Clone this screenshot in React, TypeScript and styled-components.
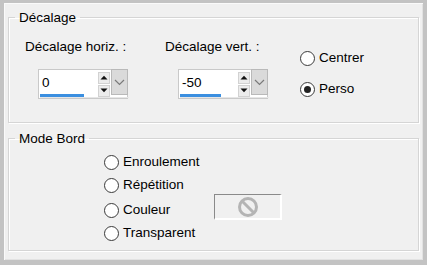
import React from "react";
import styled, { createGlobalStyle } from "styled-components";

const Global = createGlobalStyle`
  html, body { margin: 0; padding: 0; background: #c3c3c3; }
  body { font-family: "Liberation Sans", Arial, sans-serif; }
`;

const Frame = styled.div`
  box-sizing: border-box;
  width: 427px;
  height: 265px;
  background: #f0f0f0;
  border-style: solid;
  border-color: #c3c3c3;
  border-width: 3px 4px 5px 4px;
  box-shadow: inset 1px 1px 0 #fafafa, inset -1px -1px 0 #e2e2e2;
  padding: 7px 4px 0 4px;
  font-size: 13px;
  color: #000;
`;

const Group = styled.fieldset<{ $h: number; $mt?: number }>`
  box-sizing: border-box;
  margin: ${(p) => p.$mt ?? 0}px 0 0 0;
  width: 411px;
  height: ${(p) => p.$h}px;
  border: 1px solid #d5d5d5;
  box-shadow: 1px 1px 0 #ffffff inset, 1px 1px 0 #ffffff;
  padding: 0;
  min-width: 0;
`;

const Legend = styled.legend`
  margin-left: 6px;
  padding: 0 4px 0 4px;
  font-size: 13.5px;
  line-height: 15px;
`;

const OffsetRow = styled.div`
  display: flex;
  align-items: flex-start;
  padding: 14px 0 0 16px;
`;

const Field = styled.div<{ $w: number }>`
  display: flex;
  flex-direction: column;
  width: ${(p) => p.$w}px;
`;

const FieldLabel = styled.div`
  font-size: 13.5px;
  line-height: 15px;
  height: 15px;
`;

const Spinner = styled.div`
  margin: 15px 0 0 13px;
  display: flex;
  width: 90px;
  height: 30px;
  box-sizing: border-box;
  border: 1px solid #c9c9c9;
  background: #fff;
`;

const InputArea = styled.div`
  position: relative;
  width: 59px;
  box-sizing: border-box;
  padding: 5px 0 0 3px;
  font-size: 13.5px;
  line-height: 15px;
  background: #fff;
`;

const Progress = styled.div`
  position: absolute;
  left: 1px;
  bottom: 1px;
  height: 3px;
  background: #3b8fe0;
`;

const ProgressTrack = styled.div`
  position: absolute;
  left: 1px;
  right: -31px;
  bottom: 0px;
  height: 1px;
  background: #e6e6e6;
`;

const SpinCol = styled.div`
  display: flex;
  flex-direction: column;
  justify-content: center;
  gap: 1px;
  width: 13px;
  background: #fff;
`;

const SpinBtn = styled.div`
  width: 12px;
  height: 12px;
  box-sizing: border-box;
  background: #ececec;
  border: 1px solid #d2d2d2;
  display: flex;
  align-items: center;
  justify-content: center;
`;

const DropBtn = styled.div`
  flex: 1;
  background: #dadada;
  border: 1px solid #b9b9b9;
  margin: -1px -1px 3px 0;
  display: flex;
  align-items: center;
  justify-content: center;
`;

const RadioList = styled.div<{ $gap: number; $pt: number; $pl: number }>`
  display: flex;
  flex-direction: column;
  gap: ${(p) => p.$gap}px;
  padding: ${(p) => p.$pt}px 0 0 ${(p) => p.$pl}px;
`;

const RadioRow = styled.div`
  display: flex;
  align-items: center;
  gap: 4px;
  height: 16px;
  font-size: 13.5px;
  line-height: 16px;
`;

const RadioCircle = styled.span<{ $on?: boolean }>`
  box-sizing: border-box;
  width: 15px;
  height: 15px;
  border-radius: 50%;
  border: 1px solid #3a3a3a;
  background: #fff;
  display: flex;
  align-items: center;
  justify-content: center;
  &::after {
    content: "";
    display: ${(p) => (p.$on ? "block" : "none")};
    width: 7px;
    height: 7px;
    border-radius: 50%;
    background: #222;
  }
`;

const ModeBody = styled.div`
  display: flex;
  padding: 7px 0 0 95px;
`;

const ColorRow = styled.div`
  display: flex;
  align-items: center;
  height: 16px;
  margin-top: 2px;
`;

const ColorLabel = styled.div`
  width: 110px;
`;

const ColorSwatch = styled.div`
  flex: none;
  margin-top: -6px;
  width: 68px;
  height: 26px;
  box-sizing: border-box;
  border-top: 1px solid #8a8a8a;
  border-left: 1px solid #8a8a8a;
  border-right: 2px solid #ffffff;
  border-bottom: 2px solid #ffffff;
  display: flex;
  align-items: center;
  justify-content: center;
`;

const Up = () => (
  <svg width="8" height="5" viewBox="0 0 8 5">
    <path d="M0.5 4.5 L4 0.8 L7.5 4.5 Z" fill="#111" />
  </svg>
);
const Down = () => (
  <svg width="8" height="5" viewBox="0 0 8 5">
    <path d="M0.5 0.5 L4 4.2 L7.5 0.5 Z" fill="#111" />
  </svg>
);
const Chevron = () => (
  <svg width="11" height="7" viewBox="0 0 11 7">
    <path d="M1 1 L5.5 5.5 L10 1" stroke="#7a7a7a" strokeWidth="1.2" fill="none" />
  </svg>
);

const NoIcon = () => (
  <svg width="22" height="22" viewBox="0 0 22 22">
    <circle cx="11" cy="11" r="8.5" stroke="#b4b4b4" strokeWidth="3" fill="none" />
    <path d="M5 5 L17 17" stroke="#b4b4b4" strokeWidth="3" />
  </svg>
);

const SpinInput = ({ value, pct }: { value: string; pct: number }) => (
  <Spinner>
    <InputArea>
      {value}
      <ProgressTrack />
      <Progress style={{ width: `${pct}px` }} />
    </InputArea>
    <SpinCol>
      <SpinBtn>
        <Up />
      </SpinBtn>
      <SpinBtn>
        <Down />
      </SpinBtn>
    </SpinCol>
    <DropBtn>
      <Chevron />
    </DropBtn>
  </Spinner>
);

const Radio = ({ label, on }: { label: string; on?: boolean }) => (
  <RadioRow>
    <RadioCircle $on={on} />
    {label}
  </RadioRow>
);

export default function App() {
  return (
    <>
      <Global />
      <Frame>
        <Group $h={113}>
          <Legend>Décalage</Legend>
          <OffsetRow>
            <Field $w={140}>
              <FieldLabel>Décalage horiz. :</FieldLabel>
              <SpinInput value="0" pct={44} />
            </Field>
            <Field $w={135}>
              <FieldLabel>Décalage vert. :</FieldLabel>
              <SpinInput value="-50" pct={41} />
            </Field>
            <RadioList $gap={15} $pt={11} $pl={0}>
              <Radio label="Centrer" />
              <Radio label="Perso" on />
            </RadioList>
          </OffsetRow>
        </Group>
        <Group $h={120} $mt={8}>
          <Legend>Mode Bord</Legend>
          <ModeBody>
            <RadioList $gap={7} $pt={1} $pl={0}>
              <Radio label="Enroulement" />
              <Radio label="Répétition" />
              <ColorRow>
                <ColorLabel>
                  <Radio label="Couleur" />
                </ColorLabel>
                <ColorSwatch>
                  <NoIcon />
                </ColorSwatch>
              </ColorRow>
              <Radio label="Transparent" />
            </RadioList>
          </ModeBody>
        </Group>
      </Frame>
    </>
  );
}
